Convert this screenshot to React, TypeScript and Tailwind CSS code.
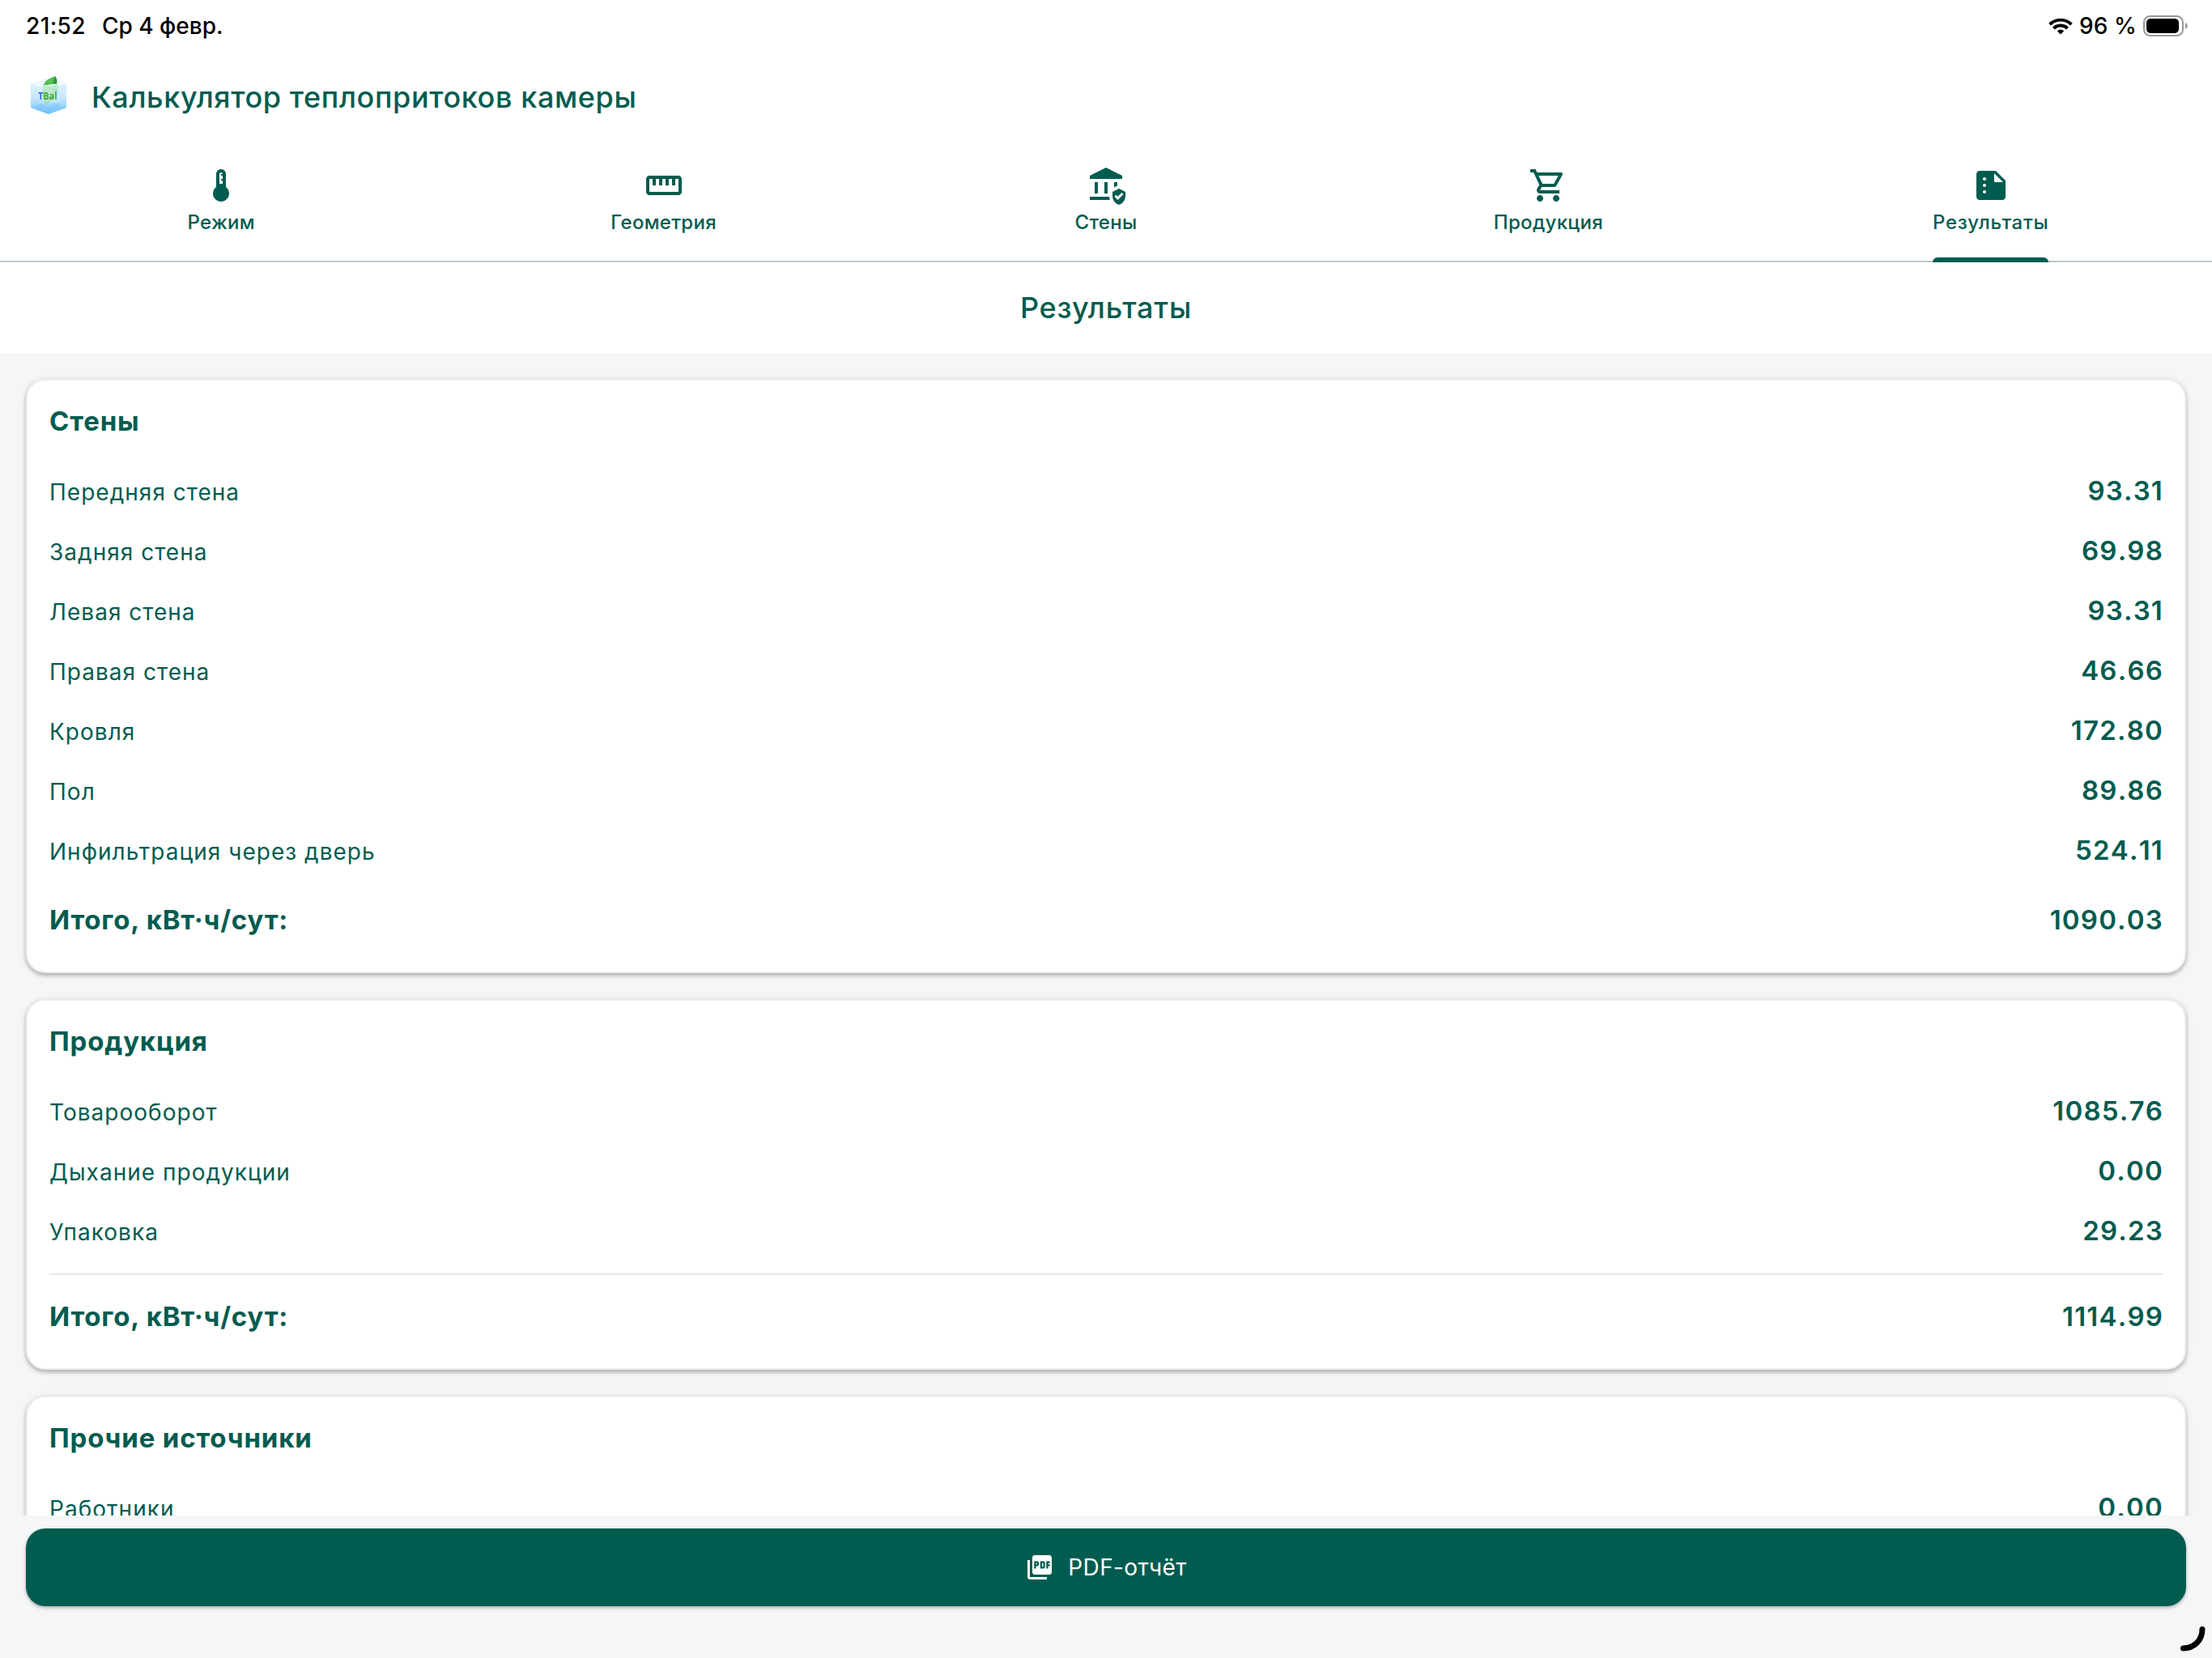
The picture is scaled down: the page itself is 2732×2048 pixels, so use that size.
import type { IconType } from "react-icons";
import {
  MdDeviceThermostat,
  MdStraighten,
  MdAssuredWorkload,
  MdOutlineShoppingCart,
  MdSummarize,
  MdPictureAsPdf,
} from "react-icons/md";

const tabs: { label: string; icon: IconType; active: boolean }[] = [
  { label: "Режим", icon: MdDeviceThermostat, active: false },
  { label: "Геометрия", icon: MdStraighten, active: false },
  { label: "Стены", icon: MdAssuredWorkload, active: false },
  { label: "Продукция", icon: MdOutlineShoppingCart, active: false },
  { label: "Результаты", icon: MdSummarize, active: true },
];

const sections = [
  {
    title: "Стены",
    rows: [
      ["Передняя стена", "93.31"],
      ["Задняя стена", "69.98"],
      ["Левая стена", "93.31"],
      ["Правая стена", "46.66"],
      ["Кровля", "172.80"],
      ["Пол", "89.86"],
      ["Инфильтрация через дверь", "524.11"],
    ],
    total: "1090.03",
    divider: false,
  },
  {
    title: "Продукция",
    rows: [
      ["Товарооборот", "1085.76"],
      ["Дыхание продукции", "0.00"],
      ["Упаковка", "29.23"],
    ],
    total: "1114.99",
    divider: true,
  },
  {
    title: "Прочие источники",
    rows: [["Работники", "0.00"]],
    total: null,
    divider: false,
  },
];

function StatusBar() {
  return (
    <div className="flex h-16 items-center justify-between pl-8 pr-[29px] text-[28px] font-medium text-black">
      <div className="flex gap-[20px]">
        <span className="tracking-[0.4px]">21:52</span>
        <span>Ср 4 февр.</span>
      </div>
      <div className="flex items-center">
        <svg viewBox="0 0 30 21" className="h-[21px] w-[30px]">
          <g fill="none" stroke="#000" strokeWidth="3.9">
            <path d="M1.6 8.1a19.2 19.2 0 0 1 26.8 0" />
            <path d="M6.4 13a12.4 12.4 0 0 1 17.2 0" />
          </g>
          <path d="M15 20.4l-4.2-4.2a6 6 0 0 1 8.4 0z" />
        </svg>
        <span className="ml-2 tracking-[0.1px]">96 %</span>
        <svg viewBox="0 0 56 26" className="ml-2 h-[26px] w-14">
          <rect x="1" y="1" width="48" height="24" rx="7.5" fill="none" stroke="#999" strokeWidth="2" />
          <rect x="4" y="4" width="40" height="18" rx="5" />
          <path d="M52 9c3.6 1.400 3.6 6.600 0 8z" fill="#999" />
        </svg>
      </div>
    </div>
  );
}

function Logo() {
  return (
    <svg viewBox="0 0 48 52" className="-mt-[3px] h-[52px] w-12">
      <defs>
        <linearGradient id="ice" x1="0" y1="0" x2="0" y2="1">
          <stop offset="0" stopColor="#e6f7fd" />
          <stop offset="0.55" stopColor="#c5e6fd" />
          <stop offset="1" stopColor="#6fbffb" />
        </linearGradient>
        <radialGradient id="glow">
          <stop offset="0" stopColor="#f2fff0" />
          <stop offset="1" stopColor="#d7f2fa" stopOpacity="0" />
        </radialGradient>
      </defs>
      <path d="M24 5l22 6v30l-22 8-22-8V11z" fill="url(#ice)" />
      <path d="M2 11l22 8 22-8-22-6z" fill="#eefafd" />
      <path d="M2 41l22-8 22 8-22 8z" fill="#7ec6fb" opacity="0.6" />
      <circle cx="24" cy="25" r="16" fill="url(#glow)" />
      <path d="M17 13c6 2 12 1 18-1 3 9-3 20-16 26 1-4-1-6-3-9z" fill="#8fdc9a" opacity="0.5" />
      <path d="M18 13C20 6 26 5 32 2c2 3 3 6 2 9.500-5-.5-10 2-16 1.500z" fill="#4fc24f" />
      <path d="M32 2c2 3 3 6 2 9.500l-5-.3z" fill="#2a9440" />
      <text x="11" y="31" fontFamily="Open Sans, sans-serif" fontSize="11.7" fontWeight="700" textLength="23.500" lengthAdjust="spacingAndGlyphs" fill="#43a936">
        <tspan fill="#1d72d2">T</tspan>Bal
      </text>
    </svg>
  );
}

function Tabs() {
  return (
    <div className="grid h-[164px] grid-cols-5 border-b-2 border-[#bccac5]">
      {tabs.map((tab) => (
        <div key={tab.label} className="relative flex flex-col items-center pt-[45px]">
          <tab.icon className="size-12" />
          <span
            className={`mt-1.5 text-[24px] leading-8 font-medium ${
              tab.active ? "tracking-[0.75px]" : "tracking-[0.3px]"
            }`}
          >
            {tab.label}
          </span>
          {tab.active && (
            <span className="absolute -bottom-0.5 h-1.5 w-[143px] rounded-t-[6px] bg-[#005c4f]" />
          )}
        </div>
      ))}
    </div>
  );
}

function ResultCard({ section }: { section: (typeof sections)[number] }) {
  return (
    <div className="shrink-0 rounded-[24px] border-2 border-[#eeeeee] bg-white px-[27px] pt-[26px] pb-7 shadow-[0_3px_5px_rgba(0,0,0,0.24),0_1px_8px_rgba(0,0,0,0.10)]">
      <h2 className="mb-[26px] text-[33px] leading-[48px] font-bold tracking-[0.85px]">
        {section.title}
      </h2>
      {section.rows.map(([label, value]) => (
        <div key={label} className="flex h-[74px] items-center justify-between">
          <span className="pt-0.5 text-[28px] tracking-[1.02px]">{label}</span>
          <span className="-mr-px text-[33px] font-semibold tracking-[1.2px] [font-kerning:none]">
            {value}
          </span>
        </div>
      ))}
      {section.divider && <div className="mt-[15px] mb-[17px] h-0.5 bg-[#e6eae9]" />}
      {section.total && (
        <div className="mt-3.5 flex h-[70px] items-center justify-between text-[33px]">
          <span className="font-bold tracking-[0.8px]">Итого, кВт·ч/сут:</span>
          <span className="-mr-px font-semibold tracking-[1.2px] [font-kerning:none]">
            {section.total}
          </span>
        </div>
      )}
    </div>
  );
}

export default function App() {
  return (
    <div className="relative flex h-[2048px] w-[2732px] flex-col overflow-hidden bg-[#f5f6f8] font-['Inter',sans-serif] text-[#005c4f]">
      <header className="h-[436px] shrink-0 bg-white">
        <StatusBar />
        <div className="flex h-24 items-center pt-[15px] pl-9">
          <Logo />
          <h1 className="ml-[29px] text-[36px] font-medium tracking-[0.62px]">
            Калькулятор теплопритоков камеры
          </h1>
        </div>
        <Tabs />
        <p className="pt-[29px] text-center text-[36px] leading-[54px] font-medium tracking-[0.8px]">
          Результаты
        </p>
      </header>

      <main className="flex h-[1436px] shrink-0 flex-col gap-8 overflow-hidden px-8 pt-8">
        {sections.map((section) => (
          <ResultCard key={section.title} section={section} />
        ))}
      </main>

      <footer className="px-8 pt-4">
        <button className="flex h-24 w-full items-center justify-center gap-[17px] rounded-[24px] bg-[#005c4f] text-[28px] tracking-[0.4px] text-white shadow-[0_2px_4px_rgba(0,0,0,0.3)]">
          <MdPictureAsPdf className="size-9" />
          <span>PDF-отчёт</span>
        </button>
      </footer>

      {/* corner resize handle */}
      <svg viewBox="0 0 32 32" className="absolute right-[8px] bottom-[8px] size-8">
        <path d="M28 4.500C28 18 18 28 4.500 28" fill="none" stroke="#000" strokeWidth="7" strokeLinecap="round" />
      </svg>
    </div>
  );
}
